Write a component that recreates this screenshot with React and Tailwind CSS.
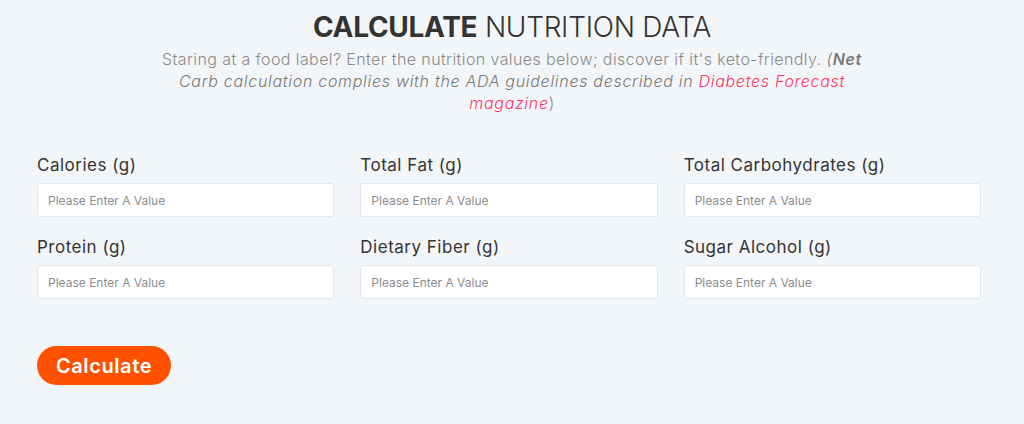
import React from 'react';

const FIELDS = [
  'Calories (g)',
  'Total Fat (g)',
  'Total Carbohydrates (g)',
  'Protein (g)',
  'Dietary Fiber (g)',
  'Sugar Alcohol (g)',
];

export default function App() {
  return (
    <div className="min-h-[424px] bg-[#f3f6f9] text-[#333] font-['Inter','Noto_Sans',sans-serif]">
      <div className="flex flex-col items-center pt-[10px]">
        <h1 className="text-[28px] leading-[34px] tracking-[-0.3px]">
          <span className="font-bold">CALCULATE</span>{' '}
          <span className="font-light">NUTRITION DATA</span>
        </h1>
        <p className="mt-[4px] w-[700px] text-center text-[16px] leading-[22px] tracking-[0.4px] font-light text-[#8a8a8a]">
          Staring at a food label? Enter the nutrition values below; discover if it's keto-friendly.{' '}
          <i className="text-[#777] tracking-[0.7px]">
            (<b className="font-semibold">Net</b> Carb calculation complies with the ADA guidelines described in{' '}
            <a className="text-[#ff3465]" href="#">Diabetes Forecast magazine</a>
          </i>
          )
        </p>
      </div>

      <div className="mx-[37px] mt-[40px] grid w-[944px] grid-cols-3 gap-x-[26px] gap-y-[19px]">
        {FIELDS.map((f) => (
          <label key={f} className="flex flex-col">
            <span className="text-[17px] leading-[22px] tracking-[0.5px] text-[#333]">{f}</span>
            <input
              className="mt-[7px] h-[34px] rounded-[3px] border border-[#e3e7ec] bg-white px-[10px] text-[12px] text-[#333] placeholder:text-[#8c8c8c] outline-none"
              placeholder="Please Enter A Value"
            />
          </label>
        ))}
      </div>

      <div className="mx-[37px] mt-[47px]">
        <button className="h-[39px] w-[134px] rounded-full bg-[#ff5100] text-[20px] tracking-[0.6px] font-semibold text-white">
          Calculate
        </button>
      </div>
    </div>
  );
}
